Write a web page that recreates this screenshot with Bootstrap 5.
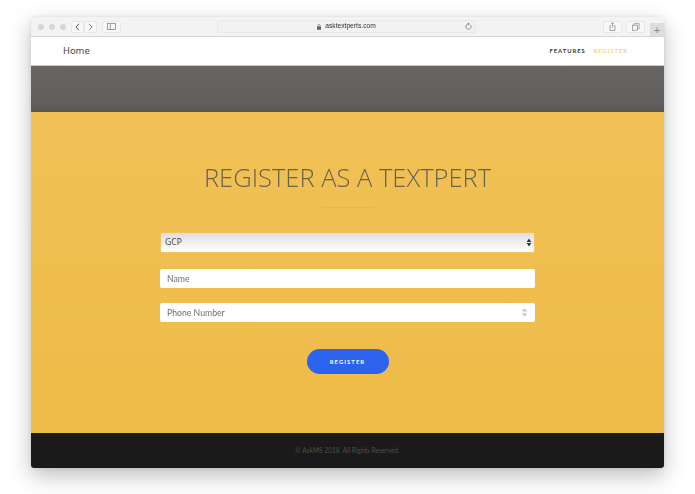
<!doctype html>
<html lang="en">
<head>
<meta charset="utf-8">
<title>Register as a Textpert</title>
<link href="https://cdn.jsdelivr.net/npm/bootstrap@5.3.0/dist/css/bootstrap.min.css" rel="stylesheet">
<style>
html,body{height:100%;background:#fff;overflow:hidden}
.stage{padding:17px 31px 26px}
.win{width:633px;height:451px;border-radius:4px 4px 3px 3px;overflow:hidden;box-shadow:0 8px 22px rgba(0,0,0,.26),0 0 4px rgba(0,0,0,.1);font-family:"Lato","Liberation Sans",sans-serif;filter:blur(.3px)}
.chrome{height:20px;background:#f4f3f4;border-bottom:1px solid #d6d6d6;flex:none;padding:0 0 0 7px;gap:5px}
.dot{width:6px;height:6px;border-radius:50%;background:#d6d6d6}
.tbtn{height:12px;background:#f8f8f8;border:1px solid #e8e8e8;border-radius:2px;color:#777}
.wide{width:19px}
.narrow{width:13px}
.urlbar{width:259px;height:13px;margin-left:91px;background:#f1f1f1;border:1px solid #e8e8e8;border-radius:2px;font-size:6.7px;color:#333;font-family:"Liberation Sans",sans-serif;position:relative}
.reload{position:absolute;right:3px;top:1px}
.rightgroup{gap:4px}
.plus{width:14px;height:13px;background:#dcdcdc;color:#888;font-size:11px;line-height:13px;margin-left:1px}
.topnav{height:29px;flex:none;padding:0 36px 0 32px;background:#fff;border-bottom:1px solid #ccc}
.brandname{color:#444;font-size:9.4px;font-family:"Noto Sans",sans-serif}
.navlink{font-size:5.8px;letter-spacing:1px;font-weight:700;color:#333;margin-left:8px;text-decoration:none}
.navlink.on{color:#f2c75c;font-weight:400}
.hero{height:46px;flex:none;background:linear-gradient(#676665,#5f5e5c 85%,#575550)}
.panel{height:321px;flex:none;background:linear-gradient(#f1c156,#efbb48);padding-top:47px}
.ttl{font-family:"Open Sans",sans-serif;font-weight:300;font-size:25.5px;line-height:36px;color:#6a6350;margin:0}
.rule{width:52px;height:1px;background:#e5b658;margin:12px auto 25px}
.regform{width:375px}
.regsel.form-select{width:373px;height:19px;min-height:0;margin:0 auto 17px;padding:0 18px 0 4px;font-size:8.6px;line-height:19px;color:#444;border:0;border-radius:1px;font-family:"Noto Sans",sans-serif;background:url("data:image/svg+xml,%3Csvg xmlns='http://www.w3.org/2000/svg' width='6' height='9'%3E%3Cpath d='M3 .5 5.3 4H.7zM3 8.5.7 5h4.6z' fill='%23333'/%3E%3C/svg%3E") no-repeat right 2px center,linear-gradient(#dedede,#f1f1f1 55%,#fff);box-shadow:0 0 1px rgba(255,255,255,.8)}
.regin.form-control{height:19px;min-height:0;padding:0 7px;font-size:8.7px;color:#666;border:0;border-radius:2px}
.gapname{margin-bottom:15px}
.regin::placeholder{color:#6f6f72;opacity:1}
.spin.form-control{background:#fff url("data:image/svg+xml,%3Csvg xmlns='http://www.w3.org/2000/svg' width='5' height='9'%3E%3Crect x='.2' y='.2' width='4.6' height='8.6' rx='2.2' fill='%23eee'/%3E%3Cpath d='M1.3 3.2 2.5 1.8 3.7 3.2M1.3 5.8 2.5 7.2 3.7 5.8' fill='none' stroke='%23555' stroke-width='.6'/%3E%3C/svg%3E") no-repeat right 8px center}
.regbtn.btn{width:82px;height:25px;padding:0;margin-top:27px;background:#2b62ee;border:0;border-radius:13px;color:#fff;font-size:5.8px;font-weight:700;letter-spacing:1.1px;line-height:25px}
.foot{height:35px;flex:none;background:#1a1a1a;color:#4e4e4e;font-size:6.6px;line-height:35px}
</style>
</head>
<body class="m-0">
<div class="stage">
<div class="win d-flex flex-column">
  <div class="chrome d-flex align-items-center">
    <span class="dot"></span><span class="dot"></span><span class="dot"></span>
    <div class="d-flex">
      <span class="tbtn narrow d-flex align-items-center justify-content-center"><svg width="5" height="8" viewBox="0 0 5 8"><path d="M4 .8 1 4l3 3.2" fill="none" stroke="#555" stroke-width="1"/></svg></span>
      <span class="tbtn narrow d-flex align-items-center justify-content-center"><svg width="5" height="8" viewBox="0 0 5 8"><path d="M1 .8 4 4 1 7.2" fill="none" stroke="#888" stroke-width="1"/></svg></span>
    </div>
    <span class="tbtn wide d-flex align-items-center justify-content-center"><svg width="9" height="7" viewBox="0 0 9 7"><rect x=".5" y=".5" width="8" height="6" fill="none" stroke="#888" stroke-width=".8"/><path d="M3.4.5v6" stroke="#888" stroke-width=".8"/></svg></span>
    <div class="urlbar d-flex align-items-center justify-content-center">
      <svg class="me-1" width="4" height="6" viewBox="0 0 4 6"><rect y="2.4" width="4" height="3.4" fill="#666"/><path d="M1 2.6V1.4a1 1 0 0 1 2 0v1.2" fill="none" stroke="#666" stroke-width=".6"/></svg>asktextperts.com
      <svg class="reload" width="7" height="9" viewBox="0 0 7 9"><path d="M5.7 3.2A2.6 2.6 0 1 1 3.5 2" fill="none" stroke="#777" stroke-width=".8"/><path d="M3 .6 4.8 2 3 3.2z" fill="#777"/></svg>
    </div>
    <div class="d-flex ms-auto align-items-center align-self-stretch rightgroup">
      <span class="tbtn wide d-flex align-items-center justify-content-center"><svg width="7" height="9" viewBox="0 0 7 9"><path d="M2 3.5H1v5h5v-5H5M3.5 6V.8M2.2 2 3.5.7 4.8 2" fill="none" stroke="#888" stroke-width=".7"/></svg></span>
      <span class="tbtn wide d-flex align-items-center justify-content-center"><svg width="8" height="8" viewBox="0 0 8 8"><rect x=".5" y="2.2" width="5" height="5" fill="none" stroke="#888" stroke-width=".7"/><path d="M2.2 2.2V.6h5v5H5.6" fill="none" stroke="#888" stroke-width=".7"/></svg></span>
      <span class="plus text-center align-self-end">+</span>
    </div>
  </div>
  <nav class="topnav d-flex align-items-center justify-content-between">
    <span class="brandname">Home</span>
    <div class="d-flex align-items-center"><a class="navlink" href="#">FEATURES</a><a class="navlink on" href="#">REGISTER</a></div>
  </nav>
  <div class="hero"></div>
  <main class="panel text-center">
    <h1 class="ttl">REGISTER AS A TEXTPERT</h1>
    <div class="rule"></div>
    <form class="regform mx-auto">
      <select class="form-select regsel"><option>GCP</option></select>
      <input class="form-control regin gapname" type="text" placeholder="Name">
      <input class="form-control regin spin" type="text" placeholder="Phone Number">
      <button class="btn regbtn" type="button">REGISTER</button>
    </form>
  </main>
  <footer class="foot text-center">© AskMS 2018. All Rights Reserved.</footer>
</div>
</div>
<script src="https://cdn.jsdelivr.net/npm/bootstrap@5.3.0/dist/js/bootstrap.bundle.min.js"></script>
</body>
</html>
